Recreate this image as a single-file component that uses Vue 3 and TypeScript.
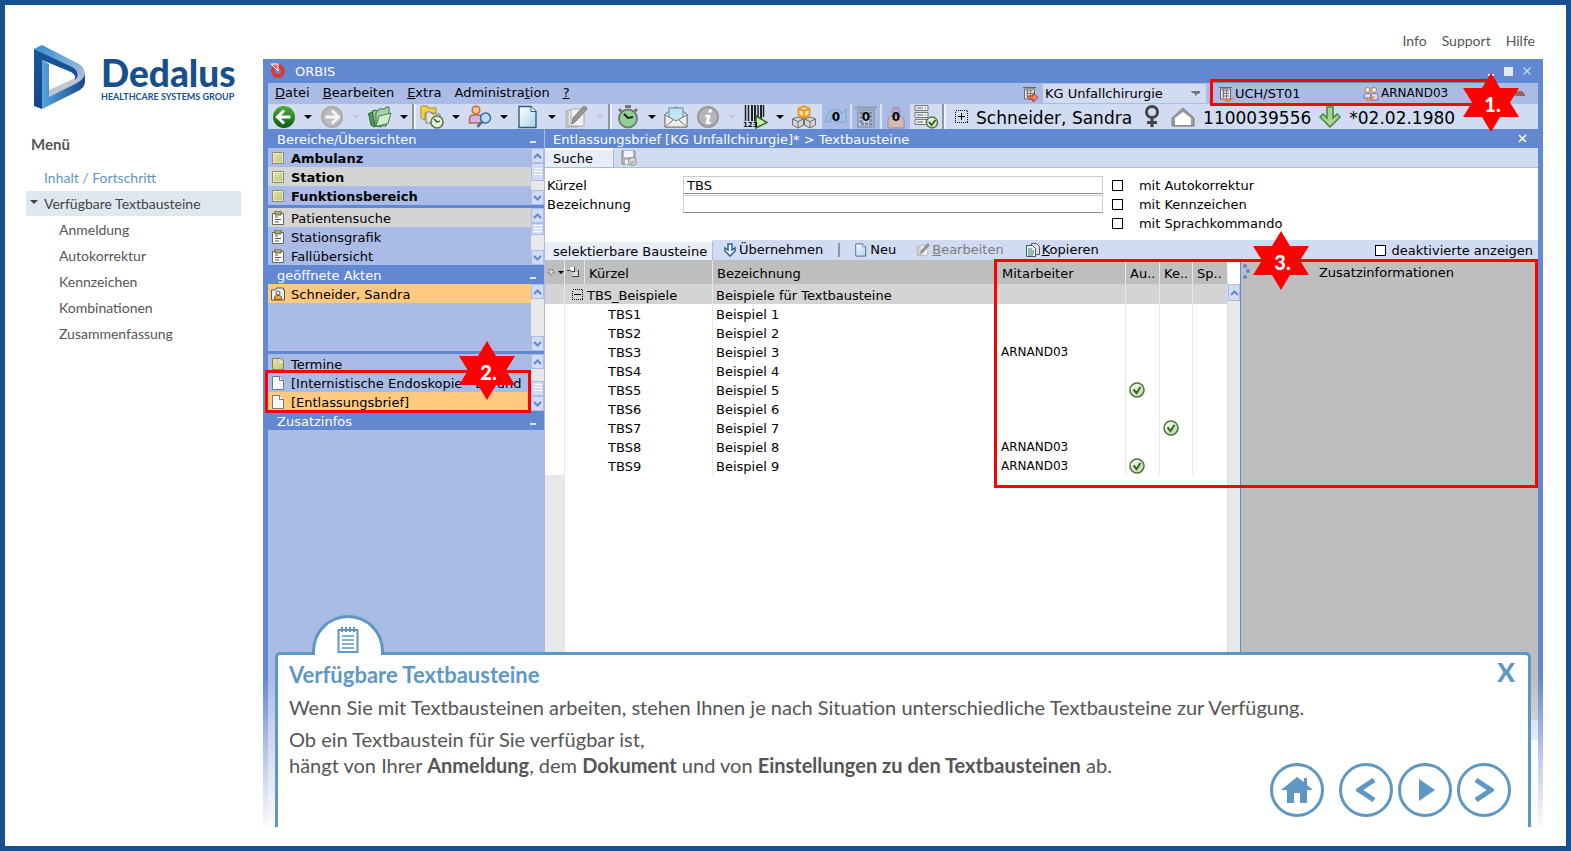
<script setup lang="ts">
import { ref } from 'vue'

interface Row { key: string; name: string; user?: string; auto?: boolean; mark?: boolean }
interface Tool { icon: string; label: string; caret?: 'on' | 'off'; sep?: boolean; digits?: string }
interface Entry { icon: string; label: string; tone?: string; bold?: boolean }
interface Pane { title?: string; entries: Entry[]; tall?: boolean; thumb: '' | 'large' | 'top' | 'bottom' }

const topLinks = ['Info', 'Support', 'Hilfe']
const chapters = ['Anmeldung', 'Autokorrektur', 'Kennzeichen', 'Kombinationen', 'Zusammenfassung']

const menus = [
  { pre: '', key: 'D', post: 'atei' },
  { pre: '', key: 'B', post: 'earbeiten' },
  { pre: '', key: 'E', post: 'xtra' },
  { pre: 'Administra', key: 't', post: 'ion' },
  { pre: '', key: '?', post: '' },
]

const tools: Tool[] = [
  { icon: 'back', label: 'Zurück', caret: 'on' },
  { icon: 'forward', label: 'Vor', caret: 'off' },
  { icon: 'folders', label: 'Akten', caret: 'on', sep: true },
  { icon: 'folder-clock', label: 'Verlauf', caret: 'on' },
  { icon: 'person-search', label: 'Patient suchen', caret: 'on' },
  { icon: 'page', label: 'Neues Dokument', caret: 'on' },
  { icon: 'pencil', label: 'Bearbeiten', caret: 'off', sep: true },
  { icon: 'watch', label: 'Termin', caret: 'on' },
  { icon: 'mail', label: 'Nachricht' },
  { icon: 'info', label: 'Information', caret: 'off' },
  { icon: 'barcode', label: 'Barcode', caret: 'on', digits: '123' },
  { icon: 'boxes', label: 'Module' },
]
const counters = [
  { icon: 'count-arrow', label: 'Vorgänge' },
  { icon: 'count-board', label: 'Aufgaben' },
  { icon: 'count-person', label: 'Personen' },
]

const panes: Pane[] = [
  {
    title: 'Bereiche/Übersichten', thumb: 'large',
    entries: [
      { icon: 'square', label: 'Ambulanz', bold: true },
      { icon: 'square', label: 'Station', bold: true, tone: 'grey' },
      { icon: 'square', label: 'Funktionsbereich', bold: true },
    ],
  },
  {
    thumb: 'top',
    entries: [
      { icon: 'clip', label: 'Patientensuche', tone: 'grey' },
      { icon: 'clip', label: 'Stationsgrafik' },
      { icon: 'clip', label: 'Fallübersicht' },
    ],
  },
  { title: 'geöffnete Akten', tall: true, thumb: '', entries: [{ icon: 'case', label: 'Schneider, Sandra', tone: 'orange' }] },
  {
    thumb: 'bottom',
    entries: [
      { icon: 'note', label: 'Termine' },
      { icon: 'doc', label: '[Internistische Endoskopie - Befund' },
      { icon: 'doc', label: '[Entlassungsbrief]', tone: 'orange' },
    ],
  },
]

const rows: Row[] = [
  { key: 'TBS1', name: 'Beispiel 1' },
  { key: 'TBS2', name: 'Beispiel 2' },
  { key: 'TBS3', name: 'Beispiel 3', user: 'ARNAND03' },
  { key: 'TBS4', name: 'Beispiel 4' },
  { key: 'TBS5', name: 'Beispiel 5', auto: true },
  { key: 'TBS6', name: 'Beispiel 6' },
  { key: 'TBS7', name: 'Beispiel 7', mark: true },
  { key: 'TBS8', name: 'Beispiel 8', user: 'ARNAND03' },
  { key: 'TBS9', name: 'Beispiel 9', user: 'ARNAND03', auto: true },
]

const kuerzel = ref('TBS')
const bezeichnung = ref('')
const options = ref([
  { id: 'opt-auto', label: 'mit Autokorrektur', on: false },
  { id: 'opt-kenn', label: 'mit Kennzeichen', on: false },
  { id: 'opt-sprach', label: 'mit Sprachkommando', on: false },
])
const inactive = ref(false)
</script>

<template>
  <svg class="sprite" aria-hidden="true">
    <defs>
      <linearGradient id="g-green" x1="0" y1="0" x2="0" y2="1"><stop offset="0" stop-color="#4fae3d" /><stop offset="1" stop-color="#0d5a14" /></linearGradient>
      <linearGradient id="g-page" x1="0" y1="0" x2="1" y2="1"><stop offset="0" stop-color="#ffffff" /><stop offset="1" stop-color="#a9d3ea" /></linearGradient>
      <linearGradient id="g-olive" x1="0" y1="0" x2="1" y2="1"><stop offset="0" stop-color="#e0e2a8" /><stop offset="1" stop-color="#c0c67c" /></linearGradient>
      <linearGradient id="g-check" x1="0" y1="0" x2="1" y2="1"><stop offset="0" stop-color="#ffffff" /><stop offset="1" stop-color="#aad9a4" /></linearGradient>
      <linearGradient id="g-logo1" x1="0" y1="0" x2="1" y2="1"><stop offset="0.1" stop-color="#3d93d3" /><stop offset="1" stop-color="#b9c6d8" /></linearGradient>
      <linearGradient id="g-logo2" x1="0" y1="0" x2="1" y2="0"><stop offset="0" stop-color="#55a5dc" /><stop offset="1" stop-color="#15488c" /></linearGradient>
      <linearGradient id="g-logo3" x1="0" y1="0" x2="0" y2="1"><stop offset="0" stop-color="#1a569c" /><stop offset="1" stop-color="#154889" /></linearGradient>
    </defs>
    <symbol id="i-back" viewBox="0 0 24 24"><circle cx="12" cy="12" r="11" fill="url(#g-green)" /><path d="M12 5.500 5.500 12l6.500 6.500M6 12h12.500" fill="none" stroke="#fff" stroke-width="3" /></symbol>
    <symbol id="i-forward" viewBox="0 0 24 24"><circle cx="12" cy="12" r="11" fill="#ababab" /><circle cx="12" cy="12" r="9" fill="#bcbcbc" /><path d="M12 5.500 18.500 12 12 18.500M18 12H5.500" fill="none" stroke="#f4f4f4" stroke-width="3" /></symbol>
    <symbol id="i-folders" viewBox="0 0 24 24"><path d="M.5 8.500 5 7l3 14-2 1-3-2z" fill="#4f9a58" stroke="#2d6b3b" /><path d="M4 6l4-1 1 1h6l1 3-3 13-6-1z" fill="#8cc48e" stroke="#2d6b3b" /><path d="M21 2h-3l-1 2h-6L8 8v13h10l3-9z" fill="#a8d4a6" stroke="#3b7d48" /><path d="M8 21.500 11 11l12-3-3 10.500z" fill="#d3ecc9" stroke="#3b7d48" /></symbol>
    <symbol id="i-folder-clock" viewBox="0 0 24 24"><path d="M1 13V2l1-1h5l1 2h8v5H5v7z" fill="#f3d34c" stroke="#b18b14" /><path d="M6 18V7h5l1 2h8v9z" fill="#e3e3e3" stroke="#818181" /><circle cx="17" cy="17" r="6" fill="#e7f3dd" stroke="#55763c" stroke-width="1.500" /><path d="M14 14l3 3 3-1" fill="none" stroke="#333" stroke-width="1.300" /></symbol>
    <symbol id="i-person-search" viewBox="0 0 24 24"><circle cx="8" cy="5" r="3.800" fill="#f7c9a0" stroke="#c96b28" stroke-width="1.500" /><path d="M1.500 18v-4c0-3 2-4 4-4h5c2 0 4 1 4 4v4z" fill="#d2b3e4" stroke="#b9683f" stroke-width="1.500" /><circle cx="17.500" cy="13" r="5" fill="#b9def4" stroke="#336d9c" stroke-width="1.500" /><path d="M13.500 17l-4 5" stroke="#3e7093" stroke-width="2.500" /></symbol>
    <symbol id="i-page" viewBox="0 0 24 24"><path d="M3 1.500h12l5 5v16H3z" fill="url(#g-page)" stroke="#2d5c80" stroke-width="1.400" /><path d="M15 1.500v5h5" fill="#fff" stroke="#2d5c80" /></symbol>
    <symbol id="i-pencil" viewBox="0 0 24 24"><path d="M2 6h12v16H2z" fill="#d0d0d0" stroke="#aaa" /><path d="M4 5h12v16H4z" fill="#e6e6e6" stroke="#aaa" /><path d="M7 4h13v17H7z" fill="#f0f0f0" stroke="#aaa" /><path d="M19 2c1-1 4 0 4 2L12 16l-4 3 1-6z" fill="#969696" stroke="#777" /></symbol>
    <symbol id="i-watch" viewBox="0 0 24 24"><path d="M9 0h6v3H9z" fill="#777" /><path d="M3 4l3 3M21 4l-3 3" stroke="#777" stroke-width="3" /><circle cx="12" cy="13.500" r="9" fill="#8fd394" stroke="#777" stroke-width="2" /><path d="M8 9l4 4 5-1" fill="none" stroke="#222" stroke-width="2" /></symbol>
    <symbol id="i-mail" viewBox="0 0 24 24"><path d="M1 9l11-7 11 7v13H1z" fill="#d9d9d9" stroke="#777" /><path d="M5 3h14v10l-7 4-7-4z" fill="#bfe4f5" stroke="#5e8ca5" /><path d="M1 10l11 6 11-6v12H1z" fill="#ededed" stroke="#7b7b7b" /><path d="M1 22l8-7M23 22l-8-7" stroke="#7b7b7b" /></symbol>
    <symbol id="i-info" viewBox="0 0 24 24"><circle cx="12" cy="12" r="11" fill="#999" /><circle cx="12" cy="12" r="9" fill="#b6b6b6" /><path d="M13 4.500h3l-.6 3h-3zM9.500 10h5l-1.600 7h2l-.4 2h-5l1.500-7h-2z" fill="#fff" /></symbol>
    <symbol id="i-barcode" viewBox="0 0 24 24"><path d="M1.500 0v16M4.500 0v16M14 0v16M19.500 0v12" stroke="#222" stroke-width="1.500" /><path d="M8 0v16M11 0v16M17 0v16" stroke="#222" stroke-width="2" /><path d="M12 11l11 6.500L12 23z" fill="#c8ebb0" stroke="#2f6426" stroke-width="1.500" /></symbol>
    <symbol id="i-boxes" viewBox="0 0 24 24"><g stroke="#6d6d6d" fill="#d5d5d5"><path d="M.5 14l5.500-2 5.500 2v6L6 23 .5 20zM.5 14 6 16.500l5.500-2.500M6 16v7M12.500 14l5.500-2 5.500 2v6L18 23l-5.500-3zM12.500 14l5.500 2.500 5.500-2.500M18 16v7" /></g><path d="M6.500 3.500 12 1l5.500 2.500V10L12 13l-5.500-3zM6.500 3.500 12 6l5.500-2.500M12 6v7" fill="#ffdd9a" stroke="#f08a00" stroke-width="1.500" /></symbol>
    <symbol id="i-count-arrow" viewBox="0 0 24 24"><path d="M2 17C1 5 13 1 18 8l4-4v13H10l5-5c-4-5-9-2-8 5z" fill="#9fc0e2" stroke="#7ba1cc" /></symbol>
    <symbol id="i-count-board" viewBox="0 0 24 24"><path d="M1 1.500h22v2H1z" fill="#8f9bb2" /><path d="M4 5h16v17H4z" fill="#c3cde2" stroke="#8a96ad" stroke-width="1.500" /><path d="M7 8h10v11H7z" fill="none" stroke="#7d8aa3" stroke-width="3" stroke-dasharray="3 1" /></symbol>
    <symbol id="i-count-person" viewBox="0 0 24 24"><circle cx="12" cy="6" r="4" fill="#c2a8c4" stroke="#9c84ac" /><path d="M4 23v-8c0-3 3-4 5-4h6c3 0 5 2 5 4v8z" fill="#d1b9b4" stroke="#9c84ac" /></symbol>
    <symbol id="i-server" viewBox="0 0 24 24"><g fill="#eee" stroke="#777"><path d="M1 .5h13v5H1zM1 7.500h13v5H1zM1 14.500h13v5H1z" /></g><path d="M3 3h6M3 10h6M3 17h6M11 3h1M11 10h1M11 17h1" stroke="#666" /><circle cx="18" cy="17.500" r="5.500" fill="url(#g-check)" stroke="#4e6d2c" stroke-width="1.300" /><path d="M15 17l2.500 3 4-5" fill="none" stroke="#3c6620" stroke-width="2" /></symbol>
    <symbol id="i-square" viewBox="0 0 14 14"><path d="M2 2h10v10H2z" fill="url(#g-olive)" stroke="#fff" /><path d="M1.500 12.500V1.500h11v11z" fill="none" stroke="#8a8d6a" /></symbol>
    <symbol id="i-clip" viewBox="0 0 14 14"><path d="M1.500 2.500h11v11h-11z" fill="#fff" stroke="#666" /><path d="M4 0h6v4H4z" fill="#b8ab6b" stroke="#6c6538" /><path d="M4 6h3M4 8.500h6M4 11h4" stroke="#555" /></symbol>
    <symbol id="i-case" viewBox="0 0 14 14"><path d="M.5 3h4l1-2h7v2h1v10H.500z" fill="#eee" stroke="#555" /><circle cx="7" cy="6" r="2" fill="#fff" stroke="#555" /><path d="M3.500 12.500V10c0-2 7-2 7 0v2.500z" fill="#f6a13c" stroke="#7b5630" /></symbol>
    <symbol id="i-note" viewBox="0 0 14 14"><path d="M1.500 1.500h8l3 2v9h-11z" fill="url(#g-olive)" stroke="#80844f" /><path d="M9 2v3h3" fill="none" stroke="#fff" /></symbol>
    <symbol id="i-doc" viewBox="0 0 14 14"><path d="M1.500.5h7l4 4v9h-11z" fill="#f6f6f6" stroke="#777" /><path d="M8.500.5v4h4" fill="#fff" stroke="#777" /></symbol>
    <symbol id="i-up" viewBox="0 0 11 12"><path d="M2 8l3.500-3.500L9 8" fill="none" stroke="#6288d1" stroke-width="2" /></symbol>
    <symbol id="i-down" viewBox="0 0 11 12"><path d="M2 4l3.500 3.500L9 4" fill="none" stroke="#6288d1" stroke-width="2" /></symbol>
    <symbol id="i-check" viewBox="0 0 16 16"><circle cx="8" cy="8" r="7" fill="url(#g-check)" stroke="#557233" stroke-width="1.500" /><path d="M4.500 7.500 7.500 11l4-6" fill="none" stroke="#3f6320" stroke-width="2" /></symbol>
    <symbol id="i-office" viewBox="0 0 16 16"><path d="M1 1.500h13M2.500 3h10v10h-10z" fill="#eee" stroke="#666" /><path d="M4 5h7M4 7.500h7M4 10h7M5.500 3v9M8.500 3v9" stroke="#777" /></symbol>
    <symbol id="i-people" viewBox="0 0 16 16"><circle cx="4.500" cy="4" r="2.500" fill="#fbeedd" stroke="#b17f52" /><circle cx="11" cy="4" r="2.500" fill="#fbeedd" stroke="#b17f52" /><path d="M1 12V9c0-2 7-2 7 0v3zM8 14V9c0-2 7-2 7 0v5z" fill="#e2d8ec" stroke="#7e6b99" /><path d="M3 13c3 3 7 1 8-3" fill="none" stroke="#e78a3a" stroke-width="1.500" /></symbol>
    <symbol id="i-star" viewBox="0 0 56 59"><path d="M28 0 37 15H56L47 29.500 56 44H37L28 59 19 44H0L9 29.500 0 15H19z" fill="#f00" /></symbol>
  </svg>

  <div class="frame">
    <aside class="side">
      <div class="logo">
        <svg width="52" height="65" viewBox="0 0 52 65" aria-hidden="true">
          <path d="M0 4 8 0 45 19c5 3 6 6 6 14-1 4-3 6-8 7 3-6 1-12-5-16z" fill="url(#g-logo1)" />
          <path d="M15 45 37 35c4-2 6-4 6-8l3 6c0 4-2 6-5 8L15 54z" fill="#bfc5d2" />
          <path d="M8 15 15 19V52L43 38c5-3 8-6 8-11v9c0 5-3 8-7 10L8 64z" fill="url(#g-logo2)" />
          <path d="M0 4 38 22c7 4 7 10 3 13 1-4-1-6-4-8L8 15V64L0 61z" fill="url(#g-logo3)" />
        </svg>
        <div class="logo-text"><strong>Dedalus</strong><span>HEALTHCARE SYSTEMS GROUP</span></div>
      </div>
      <h2>Menü</h2>
      <nav class="toc" aria-label="Menü">
        <a href="#inhalt" class="toc-top">Inhalt / Fortschritt</a>
        <a href="#textbausteine" class="toc-open">Verfügbare Textbausteine</a>
        <a v-for="c in chapters" :key="c" :href="'#' + c.toLowerCase()" class="toc-sub">{{ c }}</a>
      </nav>
    </aside>

    <div class="stage">
      <nav class="top-links" aria-label="Service"><a v-for="l in topLinks" :key="l" :href="'#' + l.toLowerCase()">{{ l }}</a></nav>

      <section class="window">
        <header class="titlebar">
          <svg width="16" height="16" viewBox="0 0 16 16" aria-hidden="true"><circle cx="8" cy="8" r="5" fill="none" stroke="#e03530" stroke-width="4" /><path d="M4 0l5 0-1 6z" fill="#6288d1" /><path d="M1 1h7v7z" fill="#f4645a" stroke="#fff" stroke-width="1" /></svg>
          <span>ORBIS</span>
          <div class="win-buttons"><i class="w-min"></i><i class="w-max"></i><svg width="8" height="8" viewBox="0 0 8 8"><path d="M.5.500l7 7M7.500.5l-7 7" stroke="#c3d1ee" stroke-width="1.500" /></svg></div>
        </header>

        <div class="menubar">
          <button v-for="m in menus" :key="m.key" type="button">{{ m.pre }}<u>{{ m.key }}</u>{{ m.post }}</button>
          <div class="session">
            <svg width="16" height="16"><use href="#i-office" /><path d="M7 10h4V7l5 4.500-5 4.500v-3H7z" fill="#f08a6a" stroke="#b02a2a" /></svg>
            <select aria-label="Arbeitsplatz"><option>KG Unfallchirurgie</option></select>
            <span class="unit"><svg width="16" height="16"><use href="#i-office" /><path d="M5 12c2 4 7 4 10 0" fill="none" stroke="#e78a3a" stroke-width="2" /></svg>UCH/ST01</span>
            <span class="login"><svg width="16" height="16"><use href="#i-people" /></svg>ARNAND03</span>
            <svg width="14" height="8" viewBox="0 0 14 8"><path d="M0 3h3l2-2h6l3 3-1 2H5L3 5H0z" fill="#777" /><path d="M6 5.500h8M7 3h5" stroke="#d33" stroke-dasharray="2 1" /></svg>
          </div>
        </div>

        <div class="toolbar">
          <template v-for="t in tools" :key="t.icon">
            <button class="tool" type="button" :aria-label="t.label"><svg width="24" height="24"><use :href="'#i-' + t.icon" /></svg><small v-if="t.digits">{{ t.digits }}</small></button>
            <i v-if="t.caret" class="caret" :class="t.caret"></i>
            <i v-if="t.sep" class="sep"></i>
          </template>
          <button v-for="c in counters" :key="c.icon" class="counter" type="button" :aria-label="c.label"><svg width="24" height="24"><use :href="'#i-' + c.icon" /></svg><b>0</b></button>
          <button class="tool" type="button" aria-label="Server"><svg width="24" height="24"><use href="#i-server" /></svg></button>
          <i class="sep"></i>
          <div class="patient">
            <svg width="13" height="13" viewBox="0 0 13 13" shape-rendering="crispEdges"><path d="M.5.500h12v12H.500z" fill="none" stroke="#000" stroke-dasharray="1 1" /><path d="M3 6.500h7M6.500 3v7" stroke="#000" /></svg>
            <span>Schneider, Sandra</span>
            <svg class="female" width="16" height="23" viewBox="0 0 16 23"><circle cx="8" cy="7" r="5.500" fill="none" stroke="#444" stroke-width="3" /><path d="M8 12v10M3 17.500h10" stroke="#444" stroke-width="3" /></svg>
            <svg width="24" height="20" viewBox="0 0 24 20"><path d="M1 11 12 1l11 10v8H1z" fill="#9a9a9a" stroke="#7d7d7d" /><path d="M4 18v-7l8-6 8 6v7z" fill="#fff" /></svg>
            <span>1100039556</span>
            <svg width="22" height="22" viewBox="0 0 22 22"><path d="M8 1h6v11l4-4 3 3-10 10L1 11l3-3 4 4z" fill="#a5d592" stroke="#4c8040" stroke-width="1.500" /></svg>
            <span>*02.02.1980</span>
          </div>
        </div>

        <div class="work">
          <div class="nav-col">
            <template v-for="(p, i) in panes" :key="i">
              <h3 v-if="p.title">{{ p.title }}<i></i></h3>
              <div class="pane" :class="{ tall: p.tall, joined: !p.title }">
                <ul>
                  <li v-for="e in p.entries" :key="e.label" :class="[e.tone, { bold: e.bold }]"><svg width="14" height="14"><use :href="'#i-' + e.icon" /></svg><span>{{ e.label }}</span></li>
                </ul>
                <div class="scroll">
                  <button type="button" aria-label="Nach oben"><svg width="11" height="12"><use href="#i-up" /></svg></button>
                  <i v-if="p.thumb" class="thumb" :class="p.thumb"></i>
                  <button type="button" class="end" aria-label="Nach unten"><svg width="11" height="12"><use href="#i-down" /></svg></button>
                </div>
              </div>
            </template>
            <h3>Zusatzinfos<i></i></h3>
          </div>

          <main class="doc">
            <h3 class="doc-title">Entlassungsbrief [KG Unfallchirurgie]* &gt; Textbausteine<svg width="9" height="9" viewBox="0 0 9 9"><path d="M1 1l7 7M8 1 1 8" stroke="#fff" stroke-width="1.500" /></svg></h3>
            <div class="tabbar search-tabs">
              <button type="button" class="tab">Suche</button>
              <button type="button" class="save" aria-label="Suche speichern"><svg width="16" height="16" viewBox="0 0 16 16"><path d="M1 1h13v13H1z" fill="#b5b5b5" stroke="#888" /><path d="M3 1h9v6H3z" fill="#f5f5f5" /><path d="M4 10h6v4H4z" fill="#eee" /><circle cx="11.500" cy="11.500" r="4" fill="#ddd" stroke="#888" /><path d="M9.500 11.500l1.500 2 2.500-3" fill="none" stroke="#777" /></svg></button>
            </div>
            <form class="search" @submit.prevent>
              <div class="fields">
                <label for="kuerzel">Kürzel</label><input id="kuerzel" v-model="kuerzel" type="text" />
                <label for="bez">Bezeichnung</label><input id="bez" v-model="bezeichnung" type="text" />
              </div>
              <div class="options">
                <label v-for="o in options" :key="o.id" :for="o.id"><input :id="o.id" v-model="o.on" type="checkbox" />{{ o.label }}</label>
              </div>
            </form>

            <div class="tabbar actions">
              <button type="button" class="tab wide">selektierbare Bausteine</button>
              <button type="button" class="act"><svg width="14" height="14" viewBox="0 0 14 14"><path d="M5 1h4v6l3-2v3L7 13 2 8V5l3 2z" fill="#fff" stroke="#2c5f9c" stroke-width="1.500" /></svg>Übernehmen</button>
              <i class="bar"></i>
              <button type="button" class="act"><svg width="14" height="14"><use href="#i-page" /></svg>Neu</button>
              <button type="button" class="act off"><svg width="14" height="14"><use href="#i-pencil" /></svg><span><u>B</u>earbeiten</span></button>
              <button type="button" class="act"><svg width="14" height="14" viewBox="0 0 14 14"><path d="M5.500.500h5l3 3v8h-8z" fill="#e5dcef" stroke="#6a4b7d" /><path d="M.500 2.500h6l3 3v8h-9z" fill="#e8f2ef" stroke="#2e6868" /><path d="M2 6h4M2 8h6M2 10h6M2 12h5" stroke="#437b7b" /></svg><span><u>K</u>opieren</span></button>
              <label class="inactive" for="inactive"><input id="inactive" v-model="inactive" type="checkbox" />deaktivierte anzeigen</label>
            </div>

            <div class="split">
              <div class="grid-area">
                <table>
                  <colgroup><col class="c-s" /><col class="c-s" /><col class="c-key" /><col /><col class="c-user" /><col class="c-a" /><col class="c-k" /><col class="c-a" /></colgroup>
                  <thead>
                    <tr>
                      <th aria-label="Einstellungen"><svg width="18" height="12" viewBox="0 0 18 12"><circle cx="5" cy="6" r="2.500" fill="#ddd" stroke="#8f8f8f" stroke-dasharray="2 1" stroke-width="2" /><path d="M12 5h6l-3 3z" /></svg></th>
                      <th aria-label="Baum"><svg width="14" height="12" viewBox="0 0 14 12" shape-rendering="crispEdges"><path d="M4 1h4v4H4z" fill="#fff" /><path d="M1 4.500h4M8.500 1v4.500H5M12.500 4v6.500H6" fill="none" stroke="#444" /><path d="M8 6h4v4H6z" fill="#ddd" /></svg></th>
                      <th>Kürzel</th><th>Bezeichnung</th><th>Mitarbeiter</th><th>Au..</th><th>Ke..</th><th>Sp..</th>
                    </tr>
                  </thead>
                  <tbody>
                    <tr class="group">
                      <td></td>
                      <td class="tree"><svg width="11" height="11" viewBox="0 0 11 11" shape-rendering="crispEdges"><path d="M.5.500h10v10H.500z" fill="none" stroke="#000" stroke-dasharray="1 1" /><path d="M2 5.500h7" stroke="#000" /></svg></td>
                      <td class="first">TBS_Beispiele</td><td>Beispiele für Textbausteine</td><td></td><td></td><td></td><td></td>
                    </tr>
                    <tr v-for="r in rows" :key="r.key">
                      <td></td><td class="tree"></td><td class="key">{{ r.key }}</td><td>{{ r.name }}</td><td class="user">{{ r.user }}</td>
                      <td><svg v-if="r.auto" width="16" height="16" role="img" aria-label="ja"><use href="#i-check" /></svg></td>
                      <td><svg v-if="r.mark" width="16" height="16" role="img" aria-label="ja"><use href="#i-check" /></svg></td>
                      <td></td>
                    </tr>
                  </tbody>
                </table>
              </div>
              <div class="scroll grid-scroll"><button type="button" aria-label="Nach oben"><svg width="11" height="12"><use href="#i-up" /></svg></button></div>
              <aside class="extra">
                <svg class="grip" width="7" height="16" viewBox="0 0 7 16"><g fill="#6288d1"><circle cx="2" cy="2" r="2" /><circle cx="5" cy="7" r="2" /><circle cx="2" cy="13" r="2" /></g></svg>
                <div class="extra-body">Zusatzinformationen</div>
                <div class="extra-foot"></div>
              </aside>
            </div>
          </main>
        </div>

        <div class="fade"></div>
        <div class="mark mark-1"></div><div class="mark mark-2"></div><div class="mark mark-3"></div>
        <div class="star star-1"><svg width="56" height="59"><use href="#i-star" /></svg><b>1.</b></div>
        <div class="star star-2"><svg width="56" height="59"><use href="#i-star" /></svg><b>2.</b></div>
        <div class="star star-3"><svg width="56" height="59"><use href="#i-star" /></svg><b>3.</b></div>

        <section class="popup">
          <div class="popup-tab">
            <svg width="22" height="28" viewBox="0 0 22 28"><path d="M1.500 4h19v22h-19z" fill="none" stroke="#5f97c4" stroke-width="2" /><path d="M5 1v5M9 1v5M13 1v5M17 1v5" stroke="#5f97c4" stroke-width="2" /><path d="M5 10h12M5 14h12M5 18h12M5 22h12" stroke="#5f97c4" stroke-width="1.500" /></svg>
          </div>
          <button type="button" class="close" aria-label="Schließen">X</button>
          <h1>Verfügbare Textbausteine</h1>
          <p>Wenn Sie mit Textbausteinen arbeiten, stehen Ihnen je nach Situation unterschiedliche Textbausteine zur Verfügung.</p>
          <p>Ob ein Textbaustein für Sie verfügbar ist,<br />hängt von Ihrer <b>Anmeldung</b>, dem <b>Dokument</b> und von <b>Einstellungen zu den Textbausteinen</b> ab.</p>
          <div class="pager">
            <button type="button" class="home" aria-label="Start"><svg width="32" height="26" viewBox="0 0 32 26"><path d="M16 0l7 5V1h3v7l6 5h-6v13h-7V16h-6v10H6V13H0z" fill="#5f97c4" /></svg></button>
            <button type="button" aria-label="Zurück"><svg width="20" height="24" viewBox="0 0 20 24"><path d="M18 2 3 12l15 10" fill="none" stroke="#5f97c4" stroke-width="5" /></svg></button>
            <button type="button" aria-label="Abspielen"><svg class="play" width="16" height="22" viewBox="0 0 16 22"><path d="M0 0l16 11L0 22z" fill="#5f97c4" /></svg></button>
            <button type="button" aria-label="Weiter"><svg width="20" height="24" viewBox="0 0 20 24"><path d="M2 2l15 10L2 22" fill="none" stroke="#5f97c4" stroke-width="5" /></svg></button>
          </div>
        </section>
      </section>
    </div>
  </div>
</template>

<style>
body { background: #fff; }
</style>

<style scoped>
* { box-sizing: border-box; }
button, input, select { font: inherit; color: inherit; }
button { padding: 0; border: 0; background: none; cursor: pointer; }
svg { display: block; flex: none; }
ul { margin: 0; padding: 0; list-style: none; }
.sprite { position: absolute; width: 0; height: 0; }

.frame { display: flex; min-height: 100vh; border: 5px solid #17508f; padding-bottom: 19px; background: #fff; color: #555; font: 14px/20px Lato, sans-serif; }
.side { flex: none; width: 258px; padding: 40px 22px 0 21px; }
.logo { display: flex; gap: 15px; padding-left: 8px; color: #17508f; }
.logo-text { white-space: nowrap; }
.logo-text strong { display: block; font-size: 37px; line-height: 48px; padding-top: 4px; font-weight: 900; }
.logo-text span { display: block; font-size: 9px; line-height: 11px; margin-top: -6px; font-weight: 700; }
.side h2 { margin: 24px 0 11px 5px; font-size: 15px; line-height: 20px; font-weight: 700; }
.toc a { display: block; margin-bottom: 1px; line-height: 25px; text-decoration: none; color: #555; white-space: nowrap; }
.toc .toc-top { padding-left: 18px; color: #5f97c4; }
.toc .toc-open { position: relative; padding-left: 18px; background: #dfe8f1; color: #444; }
.toc-open::before { content: ""; position: absolute; left: 4px; top: 9px; border: 4px solid transparent; border-top-color: #444; border-bottom: 0; }
.toc .toc-sub { padding-left: 33px; }

.stage { flex: 1; min-width: 0; display: flex; flex-direction: column; padding-right: 23px; }
.top-links { display: flex; justify-content: flex-end; gap: 15px; height: 54px; padding: 26px 8px 0 0; }
.top-links a { color: #555; text-decoration: none; }

.window { position: relative; flex: 1; display: flex; flex-direction: column; overflow: hidden; padding: 0 5px; background: #6288d1; color: #000; font: 13px/19px "DejaVu Sans", sans-serif; }
.titlebar { display: flex; align-items: center; gap: 9px; height: 24px; padding: 0 7px 0 2px; background: #6288d1; color: #fff; }
.win-buttons { margin-left: auto; display: flex; align-items: center; gap: 10px; }
.w-min { width: 6px; height: 2px; margin-top: 8px; background: #e3eaf8; }
.w-max { width: 9px; height: 9px; background: #e3eaf8; }

.menubar { display: flex; align-items: center; height: 21px; padding-left: 7px; background: #aabce5; white-space: nowrap; }
.menubar > button { margin: 0 13px 2px 0; }
.session { display: flex; align-items: center; width: 516px; height: 21px; margin-left: auto; }
.session select { width: 163px; height: 19px; margin-left: 5px; padding: 0 0 0 2px; border: 0; border-radius: 0; appearance: none; background: linear-gradient(to bottom right, #777 50%, transparent 50%) 153px 7px / 5px 5px no-repeat, linear-gradient(to bottom left, #777 50%, transparent 50%) 148px 7px / 5px 5px no-repeat, #d1dbf2; }
.unit, .login { display: flex; align-items: center; gap: 1px; }
.unit { width: 145px; margin-left: 12px; }
.login { width: 148px; gap: 2px; font-size: 12px; }

.toolbar { display: flex; align-items: center; height: 25px; background: #d1dbf2; }
.tool { position: relative; flex: none; width: 32px; height: 25px; display: grid; place-items: center; }
.tool small { position: absolute; left: 3px; bottom: 0; font-size: 7px; line-height: 8px; font-weight: 700; }
.caret { flex: none; width: 16px; display: grid; place-items: center; }
.caret::before { content: ""; border: 4px solid transparent; border-top-color: #000; border-bottom: 0; }
.caret.off::before { border-top-color: #c4c8cc; }
.sep { flex: none; width: 4px; height: 25px; border-left: 2px solid #8f959f; border-right: 2px solid #eef2fb; background: #d1dbf2; }
.counter { position: relative; flex: none; width: 30px; height: 25px; display: grid; place-items: center; border-left: 2px solid #d9e1f4; background: #aabce5; }
.counter svg, .counter b { grid-area: 1 / 1; }
.counter b { font-size: 12px; line-height: 12px; }
.patient { display: flex; align-items: center; gap: 8px; padding-left: 9px; font-size: 17px; line-height: 21px; white-space: nowrap; }
.patient span { padding-top: 4px; }
.female { margin: 0 3px 0 4px; }

.work { flex: 1; display: flex; min-height: 0; }
.nav-col { flex: none; width: 276px; background: #aabce5; }
h3 { display: flex; align-items: center; height: 19px; margin: 0; padding: 2px 8px 0 9px; background: #6288d1; color: #fff; font-size: 13px; line-height: 17px; font-weight: 400; }
.nav-col h3 i { width: 6px; height: 2px; margin: 5px 0 0 auto; background: #e3eaf8; }
.pane { display: flex; height: 57px; }
.pane.tall { height: 67px; }
.pane.joined { height: 60px; border-top: 3px solid #6288d1; }
.pane ul { flex: 1; min-width: 0; }
.pane li { display: flex; align-items: center; gap: 6px; height: 19px; padding-left: 3px; overflow: hidden; white-space: nowrap; }
.pane li span { padding-top: 2px; line-height: 17px; }
.pane li.grey { background: #d4d4d4; }
.pane li.orange { background: #ffca80; }
.pane li.bold { font-weight: 700; }
.scroll { flex: none; display: flex; flex-direction: column; width: 13px; background: #e8e8e8; }
.scroll button { display: grid; place-items: center; height: 15px; border: 1px solid #aabce5; background: #d1dbf2; }
.scroll .end { margin-top: auto; }
.thumb { height: 12px; border: 1px solid #aabce5; background: repeating-linear-gradient(#fff 0 1px, #d1dbf2 1px 3px) center / 8px 9px no-repeat, #d1dbf2; }
.thumb.large { height: 18px; }
.thumb.bottom { height: 15px; margin-top: auto; }
.thumb.bottom + .end { margin-top: 0; }

.doc { flex: 1; min-width: 0; display: flex; flex-direction: column; border-left: 1px solid #aabce5; background: #fff; }
.doc-title { padding-left: 8px; }
.doc-title svg { margin: 0 3px 2px auto; }
.tabbar { display: flex; align-items: center; height: 20px; background: #d1dbf2; white-space: nowrap; }
.tab { align-self: stretch; width: 69px; padding-left: 8px; border-top: 2px solid #fff; border-right: 1px solid #aabce5; background: #e8edf8; line-height: 17px; text-align: left; }
.tab.wide { width: 168px; }
.search-tabs { border-bottom: 1px solid #aabce5; }
.save { margin-left: 7px; }
.search { display: flex; height: 72px; padding: 8px 0 0 2px; }
.fields { flex: 561; display: grid; grid-template-columns: 136px 1fr; grid-auto-rows: 18px; row-gap: 1px; }
.fields input { min-width: 0; width: 100%; padding: 0 3px; border: 1px solid #ccc; border-bottom-color: #8c8c8c; border-radius: 0; background: #fff; outline: 0; }
.options { flex: 430; padding-left: 9px; }
.options label { display: flex; align-items: center; gap: 16px; height: 19px; }
input[type="checkbox"] { appearance: none; flex: none; width: 11px; height: 11px; margin: 0; border: 1px solid #000; background: #fff; }
.act { display: flex; align-items: center; gap: 2px; margin: 0 0 1px 10px; line-height: 17px; }
.act.off { margin-left: 20px; color: #7d7d7d; }
.act.off + .act { margin-left: 22px; }
.bar { width: 2px; height: 14px; margin: 0 4px 0 15px; background: #8f959f; }
.inactive { display: flex; align-items: center; gap: 6px; margin-left: auto; padding-right: 5px; }

.split { flex: 1; display: flex; min-height: 0; }
.grid-area { flex: 1; min-width: 0; background: linear-gradient(#e8e8e8, #e8e8e8) 0 0 / 20px 100% no-repeat; }
table { width: 100%; table-layout: fixed; border-collapse: separate; border-spacing: 0; white-space: nowrap; }
.c-s { width: 20px; } .c-key { width: 128px; } .c-user { width: 131px; } .c-a { width: 34px; } .c-k { width: 33px; }
th { height: 24px; padding: 2px 0 0 4px; border-right: 1px solid #e8e8e8; background: #bebebe; text-align: left; font-weight: 400; overflow: hidden; }
th:nth-child(-n + 2) { padding: 0 0 0 1px; }
th:nth-child(5) { padding-left: 7px; }
td { height: 19px; padding: 2px 0 0 3px; border-right: 1px solid #e8e8e8; background: #fff; line-height: 17px; overflow: hidden; }
td svg { margin-top: -2px; }
.group td { height: 20px; background: #d4d4d4; }
td.tree { border-right: 0; padding-left: 7px; }
td.first { padding-left: 2px; }
td.key { padding-left: 23px; }
td.user { padding-left: 6px; font-size: 12px; }
th:last-child, td:last-child { border-right: 0; }
.grid-scroll { border-top: 24px solid #fff; border-left: 1px solid #d1dbf2; }
.grid-scroll button { height: 17px; }
.extra { position: relative; flex: none; width: 298px; display: flex; flex-direction: column; border-left: 1px solid #6288d1; }
.grip { position: absolute; left: 2px; top: 4px; }
.extra-body { flex: 1; padding: 3px 6px 0 0; background: #bebebe; text-align: center; }
.extra-foot { height: 107px; border-top: 20px solid #d1dbf2; background: #fff; }

.mark { position: absolute; border: 3px solid #f00; }
.mark-1 { top: 20px; right: 51px; width: 282px; height: 27px; }
.mark-2 { top: 311px; left: 2px; width: 266px; height: 43px; }
.mark-3 { top: 200px; right: 5px; width: 544px; height: 229px; }
.star { position: absolute; display: grid; place-items: center; color: #fff; font: 900 20px/24px Lato, sans-serif; }
.star svg, .star b { grid-area: 1 / 1; }
.star b { padding: 2px 0 0 3px; font-weight: 900; }
.star-1 { top: 14px; right: 24px; }
.star-2 { top: 282px; left: 196px; }
.star-3 { top: 172px; right: 234px; }
.fade { position: absolute; inset: auto 0 0; height: 150px; background: linear-gradient(rgba(250, 250, 250, 0), rgba(250, 250, 250, .6) 55%, #fafafa); }

.popup { position: absolute; left: 12px; right: 12px; bottom: 0; height: 175px; padding: 7px 11px; border: 3px solid #5f97c4; border-bottom: 0; border-radius: 5px 5px 0 0; background: #fff; color: #555; font: 20px/26px Lato, sans-serif; }
.popup-tab { position: absolute; left: 34px; top: -40px; display: grid; place-items: center; width: 72px; height: 40px; padding-top: 6px; border: 3px solid #5f97c4; border-bottom: 0; border-radius: 36px 36px 0 0; background: #fff; }
.popup h1 { margin: 0 0 6px; color: #5f97c4; font-size: 22px; line-height: 26px; font-weight: 700; }
.popup p { margin: 0 0 6px; }
.close { position: absolute; right: 13px; top: 3px; color: #5f97c4; font-size: 26px; line-height: 28px; font-weight: 900; }
.pager { position: absolute; right: 17px; bottom: 10px; display: flex; gap: 5px; }
.pager button { display: grid; place-items: center; width: 54px; height: 54px; border: 3px solid #5f97c4; border-radius: 50%; background: #fff; }
.pager .home { margin-right: 10px; }
.pager .play { margin-left: 4px; }
</style>
